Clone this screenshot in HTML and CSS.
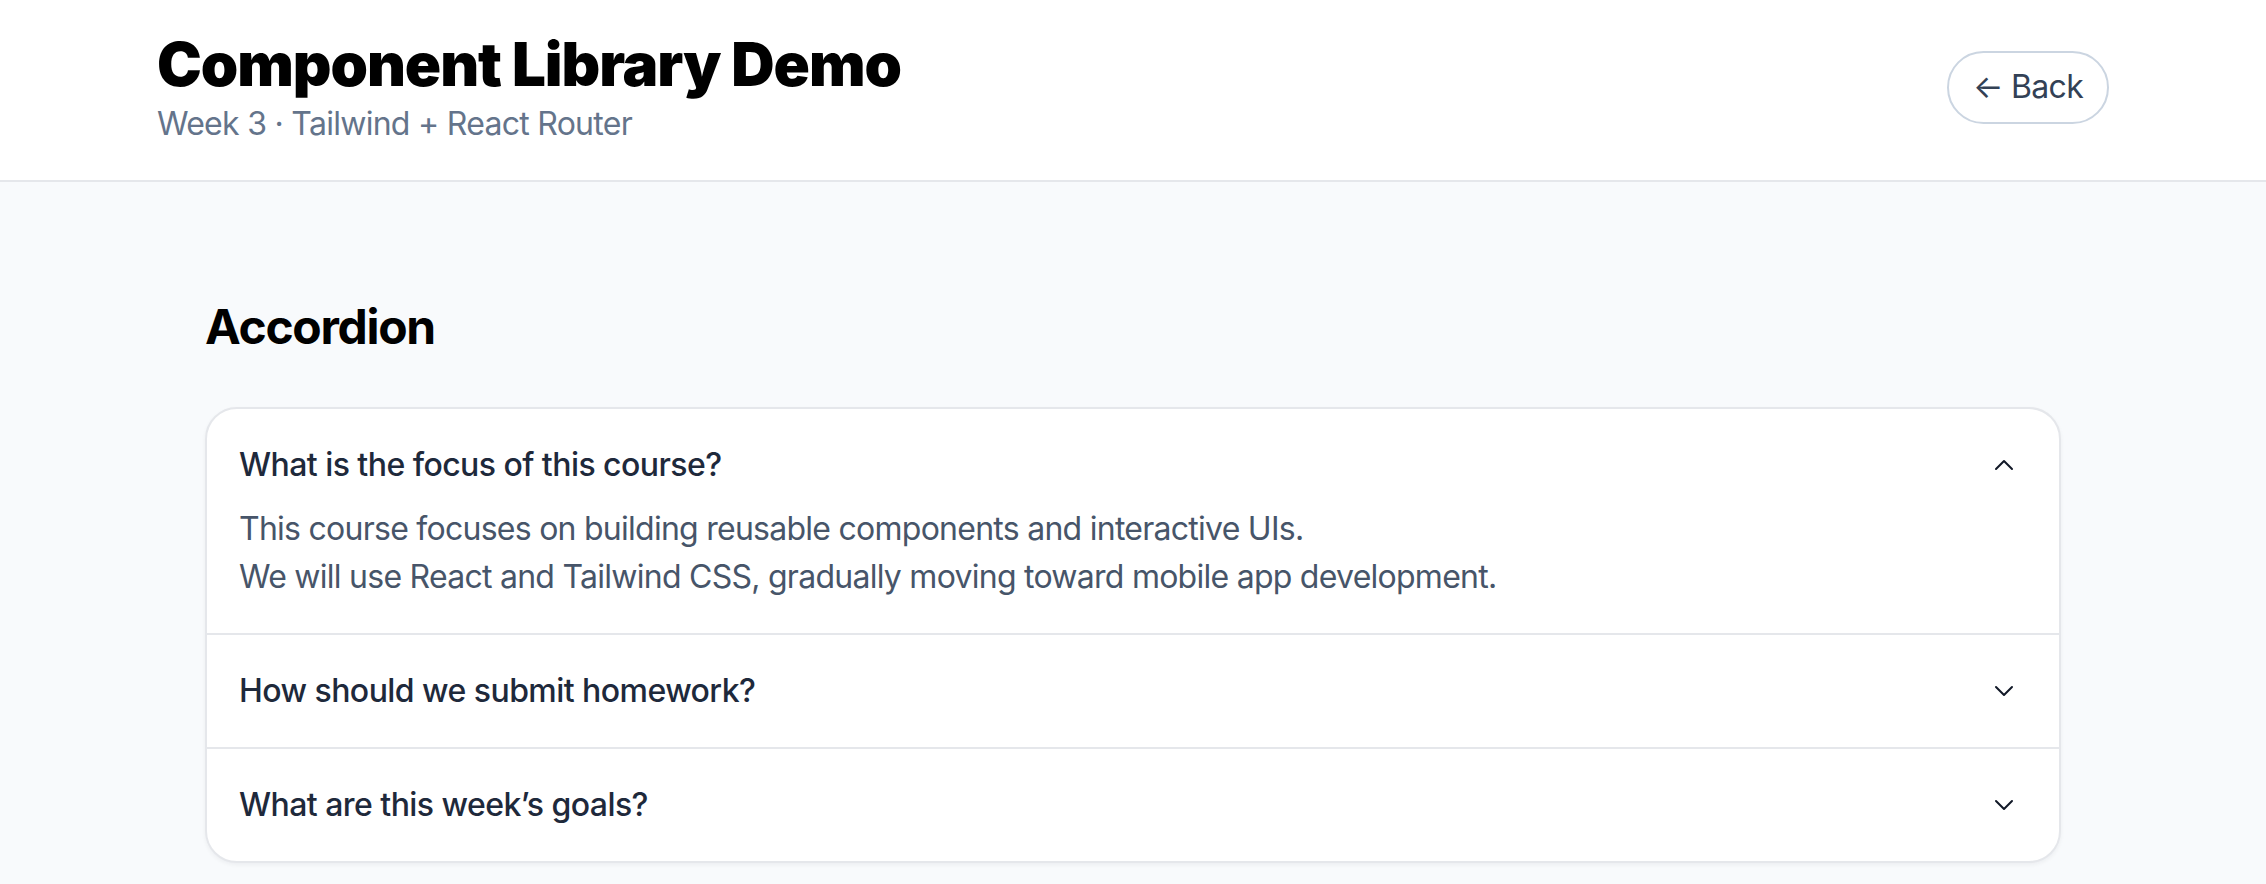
FILE: index.html
```html
<!DOCTYPE html>
<html lang="en">
<head>
<meta charset="utf-8">
<title>Component Library Demo</title>
<link rel="stylesheet" href="styles.css">
</head>
<body>
<header class="site-header">
  <div class="header-inner">
    <div class="header-text">
      <h1 class="title">Component Library Demo</h1>
      <p class="subtitle">Week 3 · Tailwind + React Router</p>
    </div>
    <a class="back-btn" href="#">← Back</a>
  </div>
</header>
<main class="main">
  <section class="section">
    <h2 class="section-title">Accordion</h2>
    <div class="accordion">
      <div class="acc-item">
        <button class="acc-trigger" type="button">
          <span class="acc-question">What is the focus of this course?</span>
          <svg class="chevron" viewBox="0 0 24 24" width="32" height="32" fill="none" stroke="currentColor" stroke-width="1.5" stroke-linecap="round" stroke-linejoin="round"><path d="m6 15 6-6 6 6"/></svg>
        </button>
        <div class="acc-panel">
          <p class="acc-answer">This course focuses on building reusable components and interactive UIs.<br>We will use React and Tailwind CSS, gradually moving toward mobile app development.</p>
        </div>
      </div>
      <div class="acc-item">
        <button class="acc-trigger" type="button">
          <span class="acc-question">How should we submit homework?</span>
          <svg class="chevron" viewBox="0 0 24 24" width="32" height="32" fill="none" stroke="currentColor" stroke-width="1.5" stroke-linecap="round" stroke-linejoin="round"><path d="m6 9 6 6 6-6"/></svg>
        </button>
      </div>
      <div class="acc-item">
        <button class="acc-trigger" type="button">
          <span class="acc-question">What are this week’s goals?</span>
          <svg class="chevron" viewBox="0 0 24 24" width="32" height="32" fill="none" stroke="currentColor" stroke-width="1.5" stroke-linecap="round" stroke-linejoin="round"><path d="m6 9 6 6 6-6"/></svg>
        </button>
      </div>
    </div>
  </section>
</main>
</body>
</html>
```

FILE: styles.css
```css
* {
  box-sizing: border-box;
}

html, body {
  margin: 0;
  padding: 0;
}

body {
  background: #f8fafc;
  font-family: Inter, "Noto Sans", "Liberation Sans", sans-serif;
  color: #0f172a;
  min-height: 100vh;
}

.site-header {
  background: #ffffff;
  border-bottom: 2px solid #e5e7eb;
}

.header-inner {
  max-width: 2048px;
  margin: 0 auto;
  padding: 28px 48px 32px;
  display: flex;
  align-items: center;
  justify-content: space-between;
}

.title {
  margin: 0;
  font-size: 60px;
  line-height: 72px;
  font-weight: 900;
  color: #000000;
  letter-spacing: -1.05px;
}

.subtitle {
  margin: 0;
  font-size: 32px;
  line-height: 48px;
  color: #64748b;
  letter-spacing: -0.72px;
}

.back-btn {
  display: inline-flex;
  align-items: center;
  padding: 10.5px 24px;
  border: 2px solid #cbd5e1;
  border-radius: 9999px;
  background: #ffffff;
  color: #334155;
  font-size: 32px;
  line-height: 48px;
  letter-spacing: -0.7px;
  text-decoration: none;
  margin-top: -2px;
}

.main {
  max-width: 2048px;
  margin: 0 auto;
  padding: 113px 48px 0;
}

.section {
  padding: 0 48px;
}

.section-title {
  margin: 0 0 48px;
  font-size: 48px;
  line-height: 64px;
  font-weight: 700;
  color: #000000;
  letter-spacing: -1.3px;
}

.accordion {
  background: #ffffff;
  border: 2px solid #e5e7eb;
  border-radius: 32px;
  box-shadow: 0 2px 4px rgba(15, 23, 42, 0.05);
  overflow: hidden;
}

.acc-item + .acc-item {
  border-top: 2px solid #e5e7eb;
}

.acc-trigger {
  width: 100%;
  display: flex;
  align-items: center;
  justify-content: space-between;
  padding: 32px 39px 32px 32px;
  background: transparent;
  border: 0;
  margin: 0;
  font-family: inherit;
  text-align: left;
  cursor: pointer;
}

.acc-question {
  font-size: 32px;
  line-height: 48px;
  font-weight: 500;
  color: #1e293b;
  letter-spacing: -0.55px;
}

.chevron {
  display: block;
  flex: none;
  color: #111827;
}

.acc-panel {
  margin-top: -16px;
  padding: 0 32px 32px;
}

.acc-answer {
  margin: 0;
  font-size: 32px;
  line-height: 48px;
  color: #475569;
  letter-spacing: -0.74px;
}
```
